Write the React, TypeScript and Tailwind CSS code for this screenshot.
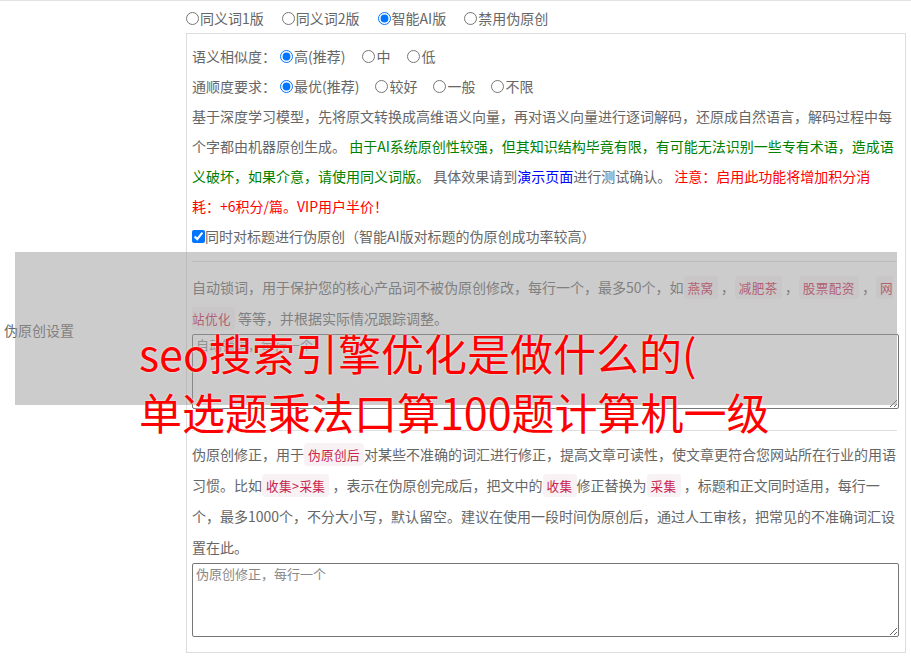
import React from "react";

function Radio({
  name,
  label,
  checked,
}: {
  name: string;
  label: string;
  checked?: boolean;
}) {
  return (
    <label className="flex items-center">
      <input
        type="radio"
        name={name}
        defaultChecked={checked}
        className="h-[13px] w-[13px]"
      />
      <span className="ml-px">{label}</span>
    </label>
  );
}

function Code({ children }: { children: React.ReactNode }) {
  return (
    <code className="rounded-[4px] bg-[#f9f2f4] px-1 py-[2px] font-['Noto_Sans_CJK_SC',sans-serif] text-[12.6px] leading-none tracking-[0.4px] text-[#c7254e]">
      {children}
    </code>
  );
}

export default function App() {
  return (
    <div className="relative w-[911px] bg-white font-['Noto_Sans_CJK_SC',sans-serif] text-[14px] text-[#666]">
      <div className="flex border-t border-[#e3e3e3]">
        {/* label column */}
        <div className="flex w-[186px] shrink-0 items-center pl-[4px]">
          伪原创设置
        </div>

        {/* content column */}
        <div className="pb-[6px]">
          <div className="flex h-[32px] items-center gap-[18px] pt-[2px]">
            <Radio name="mode" label="同义词1版" />
            <Radio name="mode" label="同义词2版" />
            <Radio name="mode" label="智能AI版" checked />
            <Radio name="mode" label="禁用伪原创" />
          </div>

          <div className="w-[720px] border border-[#ddd] pb-[15px] pl-[5px] pr-[8px] pt-[7px] leading-[30px]">
            <div className="flex items-center">
              <span>语义相似度：</span>
              <div className="ml-[4px] flex items-center gap-[17px]">
                <Radio name="sim" label="高(推荐)" checked />
                <Radio name="sim" label="中" />
                <Radio name="sim" label="低" />
              </div>
            </div>

            <div className="flex items-center">
              <span>通顺度要求：</span>
              <div className="ml-[4px] flex items-center gap-[16px]">
                <Radio name="flu" label="最优(推荐)" checked />
                <Radio name="flu" label="较好" />
                <Radio name="flu" label="一般" />
                <Radio name="flu" label="不限" />
              </div>
            </div>

            <p>
              基于深度学习模型，先将原文转换成高维语义向量，再对语义向量进行逐词解码，还原成自然语言，解码过程中每个字都由机器原创生成。{" "}
              <span className="text-[#008000]">
                由于AI系统原创性较强，但其知识结构毕竟有限，有可能无法识别一些专有术语，造成语义破坏，如果介意，请使用同义词版。
              </span>{" "}
              具体效果请到<span className="text-[#0000ff]">演示页面</span>
              进行测试确认。{" "}
              <span className="text-[#ff0000]">
                注意：启用此功能将增加积分消耗：+6积分/篇。VIP用户半价！
              </span>
            </p>

            <label className="flex items-center">
              <input
                type="checkbox"
                defaultChecked
                className="h-[13px] w-[13px]"
              />
              <span>同时对标题进行伪原创（智能AI版对标题的伪原创成功率较高）</span>
            </label>

            <div className="mt-[10px] h-px bg-[#ddd]" />

            <p className="mt-[10px] leading-[31px]">
              自动锁词，用于保护您的核心产品词不被伪原创修改，每行一个，最多50个，如
              <Code>燕窝</Code> ，<Code>减肥茶</Code> ，<Code>股票配资</Code> ，<Code>网站优化</Code> 等等，并根据实际情况跟踪调整。
            </p>
            <textarea
              placeholder="自动锁词，每行一个"
              className="block h-[75px] w-[707px] rounded-[2px] border border-[#767676] px-[3px] py-[1px] text-[13px] leading-[18px] placeholder:text-[#888]"
            />

            <div className="mt-[21px] h-px bg-[#ddd]" />

            <p className="mt-[8px] leading-[31px]">
              伪原创修正，用于<Code>伪原创后</Code>对某些不准确的词汇进行修正，提高文章可读性，使文章更符合您网站所在行业的用语习惯。比如<Code>收集&gt;采集</Code> ，表示在伪原创完成后，把文中的<Code>收集</Code>修正替换为<Code>采集</Code> ，标题和正文同时适用，每行一个，最多1000个，不分大小写，默认留空。建议在使用一段时间伪原创后，通过人工审核，把常见的不准确词汇设置在此。
            </p>
            <textarea
              placeholder="伪原创修正，每行一个"
              className="block h-[74px] w-[707px] rounded-[2px] border border-[#767676] px-[3px] py-[1px] text-[13px] leading-[18px] placeholder:text-[#888]"
            />
          </div>
        </div>
      </div>

      {/* overlay */}
      <div className="pointer-events-none absolute left-[15px] top-[252px] h-[153px] w-[882px] bg-[rgba(153,153,153,0.5)]" />
      <div className="pointer-events-none absolute left-[139px] top-[323px] whitespace-nowrap text-[43px] leading-[59px] text-[#ff0000] [text-shadow:0_0_2px_#fff]">
        <div>seo搜索引擎优化是做什么的(</div>
        <div>单选题乘法口算100题计算机一级</div>
      </div>
    </div>
  );
}
